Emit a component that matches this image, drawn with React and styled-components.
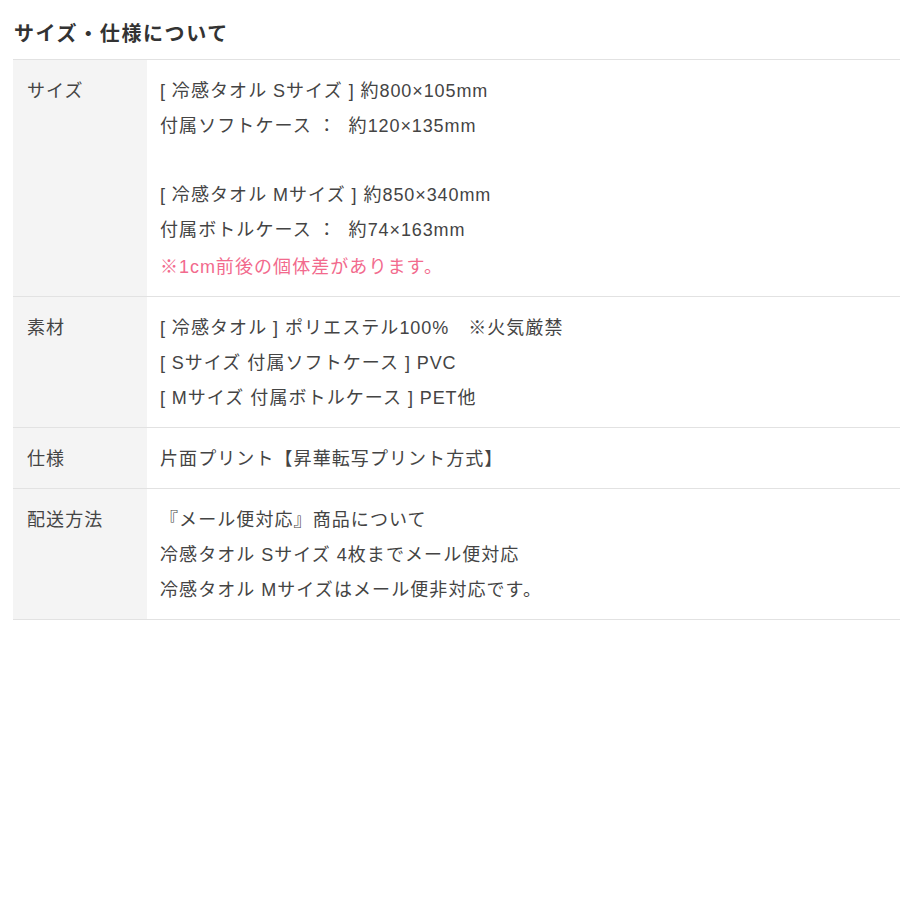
import React from "react";
import styled, { createGlobalStyle } from "styled-components";

const Global = createGlobalStyle`
  html, body { margin: 0; padding: 0; background: #fff; }
  body { font-family: "Liberation Sans", Arial, "Noto Sans CJK JP", sans-serif; color: #444; }
`;

const Page = styled.div`
  padding: 21px 0 0 13px;
  width: 900px;
  box-sizing: border-box;
`;

const Heading = styled.h2`
  margin: 0 0 12px 1px;
  font-size: 20px;
  line-height: 26px;
  font-weight: bold;
  letter-spacing: 0.08em;
  color: #333;
`;

const Table = styled.div`
  display: grid;
  grid-template-columns: 134px 1fr;
  border-top: 1px solid #e2e2e2;
`;

const Th = styled.div`
  background: #f4f4f4;
  padding: 14px 14px 11px;
  border-bottom: 1px solid #e2e2e2;
  font-size: 18px;
  line-height: 35px;
  letter-spacing: 0.06em;
  color: #444;
`;

const Td = styled.div`
  padding: 14px 13px 11px;
  border-bottom: 1px solid #e2e2e2;
  font-size: 18px;
  line-height: 35px;
  letter-spacing: 0.06em;
  color: #444;
`;

const Line = styled.div`
  min-height: ${(p) => (p.$blank ? "34px" : "35px")};
  margin-top: ${(p) => (p.$note ? "2px" : "0")};
  white-space: pre;
  color: ${(p) => (p.$note ? "#f26a8d" : "inherit")};
`;

const Latin = styled.span`
  font-size: 18px;
  letter-spacing: 0.9px;
`;

const withLatin = (text) =>
  text.split(/([\x20-\x7E×]+)/).map((seg, i) =>
    /^[\x20-\x7E×]+$/.test(seg) ? <Latin key={i}>{seg}</Latin> : seg
  );

const rows = [
  {
    label: "サイズ",
    lines: [
      { t: "[ 冷感タオル Sサイズ ] 約800×105mm" },
      { t: "付属ソフトケース ：  約120×135mm" },
      { t: "" },
      { t: "[ 冷感タオル Mサイズ ] 約850×340mm" },
      { t: "付属ボトルケース ：  約74×163mm" },
      { t: "※1cm前後の個体差があります。", note: true },
    ],
  },
  {
    label: "素材",
    lines: [
      { t: "[ 冷感タオル ] ポリエステル100%　※火気厳禁" },
      { t: "[ Sサイズ 付属ソフトケース ] PVC" },
      { t: "[ Mサイズ 付属ボトルケース ] PET他" },
    ],
  },
  {
    label: "仕様",
    lines: [{ t: "片面プリント【昇華転写プリント方式】" }],
  },
  {
    label: "配送方法",
    lines: [
      { t: "『メール便対応』商品について" },
      { t: "冷感タオル Sサイズ 4枚までメール便対応" },
      { t: "冷感タオル Mサイズはメール便非対応です。" },
    ],
  },
];

export default function App() {
  return (
    <>
      <Global />
      <Page>
        <Heading>サイズ・仕様について</Heading>
        <Table>
          {rows.map((r) => (
            <React.Fragment key={r.label}>
              <Th>{r.label}</Th>
              <Td>
                {r.lines.map((l, i) => (
                  <Line key={i} $note={l.note} $blank={l.t === ""}>
                    {withLatin(l.t)}
                  </Line>
                ))}
              </Td>
            </React.Fragment>
          ))}
        </Table>
      </Page>
    </>
  );
}
